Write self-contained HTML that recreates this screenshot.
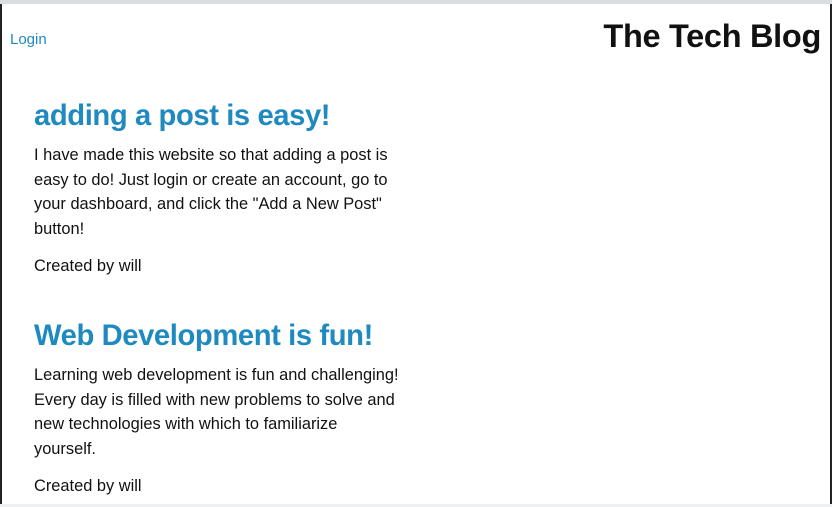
<!DOCTYPE html>
<html><head><style>
html,body{margin:0;padding:0;width:832px;height:507px;overflow:hidden;background:#fff;font-family:"Liberation Sans",sans-serif;}
.top{position:absolute;left:0;top:0;width:832px;height:4px;background:#d9dde0;}
.bot{position:absolute;left:0;top:504px;width:832px;height:3px;background:#eef1f4;}
.lb{position:absolute;left:0;top:4px;width:2px;height:500px;background:#222;}
.rb{position:absolute;left:830px;top:4px;width:2px;height:500px;background:#222;}
.login{position:absolute;left:10px;top:31px;font-size:15px;color:#1f8ac0;}
.brand{position:absolute;right:11px;top:18px;font-size:32.5px;font-weight:bold;color:#111;letter-spacing:-0.3px;}
.post{position:absolute;left:34px;width:366px;}
h2{margin:0;font-size:29.2px;color:#1f8ac0;font-weight:bold;letter-spacing:-0.4px;}
p{margin:0;font-size:16.4px;line-height:24.5px;color:#111;}
</style></head><body>
<div class="top"></div><div class="lb"></div><div class="rb"></div><div class="bot"></div>
<div class="login">Login</div>
<div class="brand">The Tech Blog</div>
<div class="post" style="top:100px">
<h2>adding a post is easy!</h2>
<p style="margin-top:10px">I have made this website so that adding a post is easy to do! Just login or create an account, go to your dashboard, and click the "Add a New Post" button!</p>
<p style="margin-top:13px">Created by will</p>
</div>
<div class="post" style="top:320px">
<h2>Web Development is fun!</h2>
<p style="margin-top:10px">Learning web development is fun and challenging! Every day is filled with new problems to solve and new technologies with which to familiarize yourself.</p>
<p style="margin-top:13px">Created by will</p>
</div>
</body></html>
